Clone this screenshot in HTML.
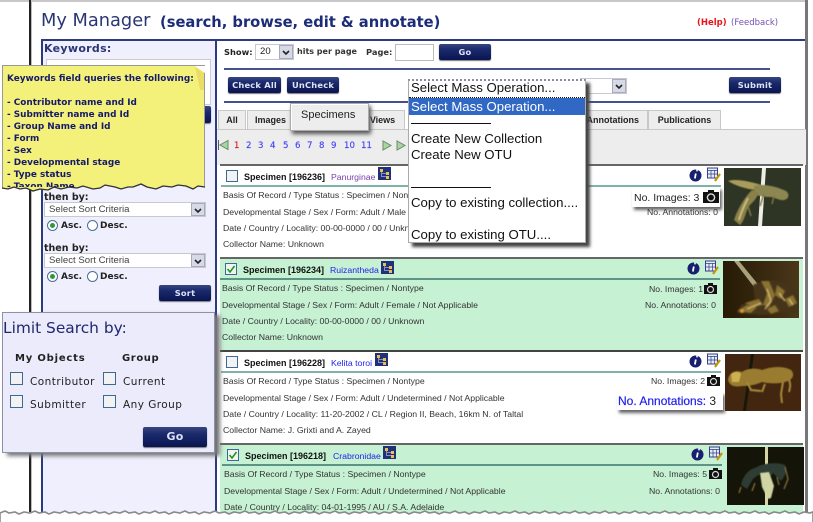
<!DOCTYPE html>
<html><head><meta charset="utf-8"><style>
html,body{margin:0;padding:0;background:#fff}
#p{position:relative;width:813px;height:522px;overflow:hidden;background:#fff;font-family:"Liberation Sans",sans-serif}
#p div,#p svg{position:absolute}
.t{white-space:nowrap;line-height:1}
.v{font-family:"DejaVu Sans",sans-serif;font-weight:bold;color:#222}
.btn{background:linear-gradient(#38457f 0,#1a2a6c 35%,#0a1450 100%);border-radius:2px;color:#dfe3f5;font:bold 8.3px/16px "DejaVu Sans",sans-serif;text-align:center;box-shadow:0 1px 1px #777;letter-spacing:.2px}
.sel{background:#fff;border:1px solid #c8c8d0;box-sizing:border-box;font-size:9.6px;color:#444;line-height:14px;padding-left:4px;white-space:nowrap}
.arr{background:#d6d9e6;border:1px solid #aab;box-sizing:border-box;right:0;top:0;bottom:0;width:14px}
.tab{background:#ededed;border:1px solid #c8c8c8;border-bottom:0;box-sizing:border-box;font:bold 9px/19px "Liberation Sans",sans-serif;text-align:center;color:#222}
.r{font-size:8.7px;color:#333;white-space:nowrap;line-height:1}
.h{font-size:9px;font-weight:bold;color:#111;white-space:nowrap;line-height:1}
.cb{width:10px;height:10px;border:1px solid #3d6a95;background:#f2f2f2;box-sizing:content-box}
.m{font-size:13.2px;color:#111;white-space:nowrap;line-height:1;left:411px}
.ln{font-family:"DejaVu Sans",sans-serif;font-size:8.6px;color:#4545f5;white-space:nowrap;line-height:1;top:142px;-webkit-text-stroke:.15px #4545f5}
.rad{width:9px;height:9px;border:1px solid #4a6f93;border-radius:50%;background:#fff}
.opt{font:10.5px/1 "DejaVu Sans",sans-serif;color:#222;letter-spacing:.45px;white-space:nowrap}
</style></head><body><div id="p">

<div style="left:0;top:0;width:807px;height:2px;background:#c8c8c8"></div>
<div style="left:29px;top:0;width:2px;height:512px;background:#222"></div>
<div style="left:31px;top:2px;width:1px;height:510px;background:#bbb"></div>
<div style="left:41px;top:40px;width:2px;height:472px;background:#2c3a80"></div>
<div style="left:43px;top:41px;width:172px;height:471px;background:#efeffd"></div>
<div style="left:215px;top:40px;width:2px;height:472px;background:#2c3a80"></div>
<div style="left:41px;top:39px;width:765px;height:2px;background:#2c3a80"></div>
<div style="left:805px;top:0;width:3px;height:512px;background:#777"></div>

<div class="t" style="left:41px;top:12px;font:17.8px/1 'DejaVu Sans',sans-serif;color:#2a3674">My Manager</div>
<div class="t" style="left:160px;top:16px;font:bold 14.7px/1 'DejaVu Sans',sans-serif;color:#1c2c78">(search, browse, edit &amp; annotate)</div>
<div class="t" style="left:697px;top:19px;font:bold 8.5px/1 'DejaVu Sans',sans-serif;color:#e8141c">(Help)</div>
<div class="t" style="left:731px;top:19px;font:8.5px/1 'DejaVu Sans',sans-serif;color:#7450b0">(Feedback)</div>

<div class="t v" style="left:44px;top:43px;font-size:11px;letter-spacing:.3px;color:#2a3674">Keywords:</div>
<div style="left:46px;top:59px;width:163px;height:44px;background:#fff;border:1px solid #ccc"></div>
<div class="btn" style="left:158px;top:106px;width:53px;height:17px"></div>

<div class="t v" style="left:224px;top:48px;font-size:8.3px">Show:</div>
<div class="sel" style="left:255px;top:44px;width:39px;height:16px;color:#222">20<div class="arr"><svg width="12" height="14" style="left:0;top:0"><path d="M3 5l3 3 3-3" fill="none" stroke="#222" stroke-width="1.6"/></svg></div></div>
<div class="t v" style="left:297px;top:48px;font-size:8px;color:#333">hits per page</div>
<div class="t v" style="left:366px;top:48px;font-size:8.3px;color:#333">Page:</div>
<div style="left:395px;top:44px;width:37px;height:15px;background:#fff;border:1px solid #bbb"></div>
<div class="btn" style="left:439px;top:44px;width:52px;height:16px">Go</div>

<div style="left:224px;top:68px;width:546px;height:2px;background:#45508e"></div>
<div style="left:224px;top:101px;width:546px;height:2px;background:#45508e"></div>
<div class="btn" style="left:228px;top:77px;width:53px;height:16px">Check All</div>
<div class="btn" style="left:287px;top:77px;width:52px;height:16px">UnCheck</div>
<div class="sel" style="left:580px;top:78px;width:47px;height:16px;border-left:0"><div class="arr"><svg width="12" height="14" style="left:0;top:0"><path d="M3 5l3 3 3-3" fill="none" stroke="#222" stroke-width="1.6"/></svg></div></div>
<div class="btn" style="left:729px;top:77px;width:52px;height:16px">Submit</div>

<div style="left:217px;top:129px;width:589px;height:35px;background:#ededed;border-top:1px solid #c8c8c8"></div>
<div class="tab" style="left:218px;top:110px;width:28px;height:19px">All</div>
<div class="tab" style="left:247px;top:110px;width:45px;height:19px;text-align:left;padding-left:7px">Images</div>
<div class="tab" style="left:360px;top:110px;width:45px;height:19px">Views</div>
<div class="tab" style="left:580px;top:110px;width:68px;height:19px;text-align:right;padding-right:8px">Annotations</div>
<div class="tab" style="left:648px;top:110px;width:73px;height:19px">Publications</div>

<svg style="left:217px;top:139px" width="14" height="12"><path d="M1.5 1v10" stroke="#557" stroke-width="1"/><path d="M11 1.5v9L3 6z" fill="#a7d6a0" stroke="#6a8c6a"/></svg>
<div class="ln" style="left:234px;color:#e02020;-webkit-text-stroke:.15px #e02020">1</div>
<div class="ln" style="left:246px">2</div><div class="ln" style="left:258px">3</div><div class="ln" style="left:270px">4</div><div class="ln" style="left:283px">5</div><div class="ln" style="left:295px">6</div><div class="ln" style="left:307px">7</div><div class="ln" style="left:319px">8</div><div class="ln" style="left:331px">9</div>
<div class="ln" style="left:344px">10</div>
<div class="ln" style="left:361px">11</div>
<svg style="left:382px;top:140px" width="27" height="11"><path d="M1 1v9L9 5.5z" fill="#a7d6a0" stroke="#6a8c6a"/><path d="M15 1v9L23 5.5z" fill="#a7d6a0" stroke="#6a8c6a"/></svg>

<!-- rows -->
<div style="left:220px;top:164px;width:583px;height:2px;background:#666"></div>
<div style="left:220px;top:166px;width:583px;height:91px;background:#fff"></div>
<div style="left:220px;top:257px;width:583px;height:2px;background:#666"></div>
<div style="left:220px;top:259px;width:583px;height:91px;background:#c6f1d3"></div>
<div style="left:220px;top:350px;width:583px;height:2px;background:#444"></div>
<div style="left:220px;top:352px;width:583px;height:91px;background:#fff"></div>
<div style="left:220px;top:443px;width:583px;height:2px;background:#666"></div>
<div style="left:220px;top:445px;width:583px;height:70px;background:#c6f1d3"></div>

<div style="left:221px;top:185px;width:500px;height:2px;background:#7fb3aa"></div>
<div style="left:220px;top:278px;width:500px;height:2px;background:#5c9487"></div>
<div style="left:221px;top:371px;width:500px;height:2px;background:#7fb3aa"></div>
<div style="left:222px;top:464px;width:500px;height:2px;background:#5c9487"></div>

<div class="cb" style="left:226px;top:170px"></div>
<div class="h" style="left:244px;top:173px">Specimen [196236]</div>
<div class="r" style="left:331px;top:173px;color:#7a3fb0">Panurginae</div>
<div class="r" style="left:223px;top:191px">Basis Of Record / Type Status : Specimen / Nontype</div>
<div class="r" style="left:223px;top:208px">Developmental Stage / Sex / Form: Adult / Male / Not Applicable</div>
<div class="r" style="left:223px;top:224px">Date / Country / Locality: 00-00-0000 / 00 / Unknown</div>
<div class="r" style="left:223px;top:240px">Collector Name: Unknown</div>

<div class="cb" style="left:225px;top:263px"></div>
<svg style="left:226px;top:264px" width="10" height="10"><path d="M1.5 5l2.5 3 4.5-6" fill="none" stroke="#1a9a1a" stroke-width="1.6"/></svg>
<div class="h" style="left:243px;top:266px">Specimen [196234]</div>
<div class="r" style="left:330px;top:266px;color:#2222ee">Ruizantheda</div>
<div class="r" style="left:222px;top:284px">Basis Of Record / Type Status : Specimen / Nontype</div>
<div class="r" style="left:222px;top:301px">Developmental Stage / Sex / Form: Adult / Female / Not Applicable</div>
<div class="r" style="left:222px;top:317px">Date / Country / Locality: 00-00-0000 / 00 / Unknown</div>
<div class="r" style="left:222px;top:333px">Collector Name: Unknown</div>

<div class="cb" style="left:226px;top:356px"></div>
<div class="h" style="left:244px;top:359px">Specimen [196228]</div>
<div class="r" style="left:331px;top:359px;color:#2222ee">Kelita toroi</div>
<div class="r" style="left:223px;top:377px">Basis Of Record / Type Status : Specimen / Nontype</div>
<div class="r" style="left:223px;top:394px">Developmental Stage / Sex / Form: Adult / Undetermined / Not Applicable</div>
<div class="r" style="left:223px;top:410px">Date / Country / Locality: 11-20-2002 / CL / Region II, Beach, 16km N. of Taltal</div>
<div class="r" style="left:223px;top:426px">Collector Name: J. Grixti and A. Zayed</div>

<div class="cb" style="left:227px;top:449px"></div>
<svg style="left:228px;top:450px" width="10" height="10"><path d="M1.5 5l2.5 3 4.5-6" fill="none" stroke="#1a9a1a" stroke-width="1.6"/></svg>
<div class="h" style="left:245px;top:452px">Specimen [196218]</div>
<div class="r" style="left:333px;top:452px;color:#2222ee">Crabronidae</div>
<div class="r" style="left:224px;top:470px">Basis Of Record / Type Status : Specimen / Nontype</div>
<div class="r" style="left:224px;top:487px">Developmental Stage / Sex / Form: Adult / Undetermined / Not Applicable</div>
<div class="r" style="left:224px;top:503px">Date / Country / Locality: 04-01-1995 / AU / S.A. Adelaide</div>

<!-- tree icons -->
<svg style="left:378px;top:167px" width="13" height="13"><rect width="13" height="13" fill="#20307a"/><path d="M3.5 3.5v6h5M3.5 6.500h5" stroke="#8890c0" fill="none"/><rect x="2" y="2" width="3" height="3" fill="#e8c050"/><rect x="8" y="5" width="3" height="3" fill="#e8c050"/><rect x="8" y="9" width="3" height="3" fill="#e8c050"/></svg>
<svg style="left:381px;top:261px" width="13" height="13"><rect width="13" height="13" fill="#20307a"/><path d="M3.500 3.500v6h5M3.500 6.500h5" stroke="#8890c0" fill="none"/><rect x="2" y="2" width="3" height="3" fill="#e8c050"/><rect x="8" y="5" width="3" height="3" fill="#e8c050"/><rect x="8" y="9" width="3" height="3" fill="#e8c050"/></svg>
<svg style="left:375px;top:353px" width="13" height="13"><rect width="13" height="13" fill="#20307a"/><path d="M3.500 3.500v6h5M3.500 6.500h5" stroke="#8890c0" fill="none"/><rect x="2" y="2" width="3" height="3" fill="#e8c050"/><rect x="8" y="5" width="3" height="3" fill="#e8c050"/><rect x="8" y="9" width="3" height="3" fill="#e8c050"/></svg>
<svg style="left:383px;top:446px" width="13" height="13"><rect width="13" height="13" fill="#20307a"/><path d="M3.500 3.500v6h5M3.500 6.500h5" stroke="#8890c0" fill="none"/><rect x="2" y="2" width="3" height="3" fill="#e8c050"/><rect x="8" y="5" width="3" height="3" fill="#e8c050"/><rect x="8" y="9" width="3" height="3" fill="#e8c050"/></svg>

<!-- info + edit icons -->
<svg style="left:689px;top:167px" width="33" height="16"><circle cx="6.500" cy="8.500" r="6" fill="#15206e"/><path d="M7.200 3.500h1.600M6.800 6.500l-.9 5" stroke="#fff" stroke-width="1.800"/><rect x="18.500" y="1" width="10" height="10" fill="#e8eaf6" stroke="#30408a"/><path d="M18 3.500h11M22 3v8M25.500 3v8M18 7h11" stroke="#30408a" stroke-width=".7"/><path d="M26 14l5-7" stroke="#c09800" stroke-width="2.200"/></svg>
<svg style="left:687px;top:260px" width="33" height="16"><circle cx="6.500" cy="8.500" r="6" fill="#15206e"/><path d="M7.200 3.500h1.600M6.800 6.500l-.9 5" stroke="#fff" stroke-width="1.800"/><rect x="18.500" y="1" width="10" height="10" fill="#e8eaf6" stroke="#30408a"/><path d="M18 3.500h11M22 3v8M25.500 3v8M18 7h11" stroke="#30408a" stroke-width=".7"/><path d="M26 14l5-7" stroke="#c09800" stroke-width="2.200"/></svg>
<svg style="left:689px;top:353px" width="33" height="16"><circle cx="6.500" cy="8.500" r="6" fill="#15206e"/><path d="M7.200 3.500h1.600M6.800 6.500l-.9 5" stroke="#fff" stroke-width="1.800"/><rect x="18.500" y="1" width="10" height="10" fill="#e8eaf6" stroke="#30408a"/><path d="M18 3.500h11M22 3v8M25.500 3v8M18 7h11" stroke="#30408a" stroke-width=".7"/><path d="M26 14l5-7" stroke="#c09800" stroke-width="2.200"/></svg>
<svg style="left:691px;top:446px" width="33" height="16"><circle cx="6.500" cy="8.500" r="6" fill="#15206e"/><path d="M7.200 3.500h1.600M6.800 6.500l-.9 5" stroke="#fff" stroke-width="1.800"/><rect x="18.500" y="1" width="10" height="10" fill="#e8eaf6" stroke="#30408a"/><path d="M18 3.500h11M22 3v8M25.500 3v8M18 7h11" stroke="#30408a" stroke-width=".7"/><path d="M26 14l5-7" stroke="#c09800" stroke-width="2.200"/></svg>

<!-- No images / annotations -->
<div style="left:632px;top:187px;width:88px;height:20px;background:#fff;box-shadow:2px 3px 3px #666"></div>
<div class="t" style="left:634px;top:193px;font-size:10.5px;color:#222">No. Images: 3</div>
<svg style="left:703px;top:190px" width="16" height="13"><rect y="2" width="16" height="11" fill="#111"/><rect x="5" width="6" height="3" fill="#111"/><circle cx="8" cy="7.500" r="3.600" fill="none" stroke="#ddd" stroke-width="1.400"/></svg>
<div class="r" style="left:647px;top:208px">No. Annotations: 0</div>

<div class="r" style="left:649px;top:285px">No. Images: 1</div>
<svg style="left:704px;top:283px" width="13" height="11"><rect y="2" width="13" height="9" fill="#111"/><rect x="4" width="5" height="3" fill="#111"/><circle cx="6.500" cy="6.500" r="3" fill="none" stroke="#ddd" stroke-width="1.200"/></svg>
<div class="r" style="left:645px;top:301px">No. Annotations: 0</div>

<div class="r" style="left:651px;top:377px">No. Images: 2</div>
<svg style="left:707px;top:375px" width="13" height="11"><rect y="2" width="13" height="9" fill="#111"/><rect x="4" width="5" height="3" fill="#111"/><circle cx="6.500" cy="6.500" r="3" fill="none" stroke="#ddd" stroke-width="1.200"/></svg>
<div style="left:617px;top:392px;width:106px;height:18px;background:#fff;box-shadow:2px 3px 3px #666"></div>
<div class="t" style="left:618px;top:395px;font-size:12px;color:#2222ee;-webkit-text-stroke:.2px #2222ee">No. Annotations: <span style="color:#222;-webkit-text-stroke:0">3</span></div>

<div class="r" style="left:653px;top:470px">No. Images: 5</div>
<svg style="left:709px;top:468px" width="13" height="11"><rect y="2" width="13" height="9" fill="#111"/><rect x="4" width="5" height="3" fill="#111"/><circle cx="6.500" cy="6.500" r="3" fill="none" stroke="#ddd" stroke-width="1.200"/></svg>
<div class="r" style="left:649px;top:487px">No. Annotations: 0</div>

<!-- thumbs -->
<svg style="left:724px;top:168px" width="77" height="58"><rect width="77" height="58" fill="#2f3524"/><path d="M38 0h4l-4 58h-4z" fill="#eeeee6"/><g style="filter:blur(.5px)"><path d="M4 13c8-3 24 1 34 4l-6 5c-10-1-20-4-28-9z" fill="#a89c5c"/><path d="M30 18c10-3 24 1 32 5 4 3 3 8-2 9-5 1-9-3-14-3-6 0-12-1-16-3z" fill="#8c8650"/><path d="M28 22c-8 8-15 20-18 30l6 5c6-6 5-14 10-20 4-4 8-8 8-13z" fill="#8a8048"/><path d="M24 30c-3 6-7 14-9 22" stroke="#c8bd80" stroke-width="2" fill="none"/><path d="M24 38l3 10M40 26l-4 12M50 28l-2 8" stroke="#7e7644" stroke-width="1.500" fill="none"/></g></svg>
<svg style="left:723px;top:261px" width="76" height="57"><defs><linearGradient id="g2" x1="0" y1="0" x2="1" y2="0"><stop offset="0" stop-color="#261a06"/><stop offset=".6" stop-color="#3a2a10"/><stop offset="1" stop-color="#4a3818"/></linearGradient></defs><rect width="76" height="57" fill="url(#g2)"/><path d="M11 0h5l26 32-4 3z" fill="#a8a27a"/><g style="filter:blur(.9px)"><path d="M30 24c12-6 28-6 38 0l8 10v16L40 54l-26-2 4-8 14-6z" fill="#46341a"/><path d="M14 50l10-6 10 2-6 6zM22 42l14-4 4 6-10 2zM38 20l6 12-4 12 6 2 6-12-6-14zM54 24l8 6-4 8-6-4zM62 38l8-4 4 8-8 4zM44 48l8-4 4 6-8 3z" fill="#8a7232"/><path d="M44 28l4 12-6 8M24 48l14-6M56 32l6 8M66 38l4 6" stroke="#e0c880" stroke-width="1.200" fill="none"/><circle cx="19" cy="50" r="2" fill="#d89a30"/></g></svg>
<svg style="left:725px;top:354px" width="76" height="57"><rect width="76" height="57" fill="#43260f"/><path d="M26 0h3l-8 57h-3z" fill="#16180c"/><g style="filter:blur(.5px)"><path d="M3 26c1-8 8-10 14-8 6-4 14-4 20-2 10-4 22-4 29 0 4 4 2 9-3 11-8 3-18 3-26 1-6 3-14 4-20 4-6 1-12 1-14-6z" fill="#9a7c30"/><path d="M6 20c3-3 8-3 10 0l-2 8-7 0z" fill="#cdb050"/><path d="M22 28l4 8 10 1M58 28l-2 12 1 9M64 26c2 4 1 8 0 12M40 30l-3 8" stroke="#a78a3a" stroke-width="2" fill="none"/></g></svg>
<svg style="left:727px;top:447px" width="77" height="58"><rect width="77" height="58" fill="#141408"/><rect x="38" width="3" height="58" fill="#d8d4a8"/><g style="filter:blur(.5px)"><path d="M14 38c2-10 8-16 16-18 6-4 22-5 28-2 3 4 0 12-4 16l-8-8-4 6-8-6-8 6-6 10z" fill="#2e3c34"/><path d="M33 26l9-1 5 14-3 12-3 1-6-12z" fill="#cfd4a4"/><path d="M58 20l3 12-4 10M28 36l-3 8M14 40l-2 6M50 30l2 8" stroke="#80703a" stroke-width="1.300" fill="none"/></g></svg>

<!-- specimens popup -->
<div style="left:290px;top:103px;width:77px;height:26px;background:#ededed;border:1px solid #aaa;box-shadow:2px 3px 4px #555,inset 1px 1px 0 #fff"></div>
<div class="t" style="left:301px;top:110px;font-size:11px;color:#222">Specimens</div>

<!-- dropdown -->
<div style="left:408px;top:79px;width:178px;height:164px;background:#fff;border:1px solid #aaa;border-top:2px dotted #88a;box-sizing:border-box;box-shadow:4px 4px 3px #444"></div>
<div style="left:409px;top:97px;width:176px;height:1px;border-top:1px dotted #111"></div>
<div style="left:409px;top:98px;width:176px;height:17px;background:#3068c4"></div>
<div class="m" style="top:81px">Select Mass Operation...</div>
<div class="m" style="top:100px;color:#fff">Select Mass Operation...</div>
<div style="left:411px;top:123px;width:80px;height:1px;background:#111"></div>
<div class="m" style="top:132px">Create New Collection</div>
<div class="m" style="top:148px">Create New OTU</div>
<div style="left:411px;top:187px;width:80px;height:1px;background:#111"></div>
<div class="m" style="top:196px">Copy to existing collection....</div>
<div class="m" style="top:228px">Copy to existing OTU....</div>

<!-- left sort -->
<div class="t v" style="left:44px;top:193px;font-size:9.500px;color:#222">then by:</div>
<div class="sel" style="left:44px;top:202px;width:162px;height:15px">Select Sort Criteria<div class="arr"><svg width="12" height="13" style="left:0;top:0"><path d="M3 5l3 3 3-3" fill="none" stroke="#222" stroke-width="1.600"/></svg></div></div>
<div class="rad" style="left:47px;top:220px"></div><div style="left:50px;top:223px;width:5px;height:5px;border-radius:50%;background:#2a9a3a"></div>
<div class="t v" style="left:61px;top:222px;font-size:9px;color:#222">Asc.</div>
<div class="rad" style="left:87px;top:220px"></div>
<div class="t v" style="left:100px;top:222px;font-size:9px;color:#222">Desc.</div>
<div class="t v" style="left:44px;top:244px;font-size:9.500px;color:#222">then by:</div>
<div class="sel" style="left:44px;top:253px;width:162px;height:15px">Select Sort Criteria<div class="arr"><svg width="12" height="13" style="left:0;top:0"><path d="M3 5l3 3 3-3" fill="none" stroke="#222" stroke-width="1.600"/></svg></div></div>
<div class="rad" style="left:47px;top:271px"></div><div style="left:50px;top:274px;width:5px;height:5px;border-radius:50%;background:#2a9a3a"></div>
<div class="t v" style="left:61px;top:273px;font-size:9px;color:#222">Asc.</div>
<div class="rad" style="left:87px;top:271px"></div>
<div class="t v" style="left:100px;top:273px;font-size:9px;color:#222">Desc.</div>
<div class="btn" style="left:159px;top:285px;width:52px;height:16px">Sort</div>

<!-- limit panel -->
<div style="left:2px;top:312px;width:213px;height:141px;background:#ebebfb;border:1px solid #8c90a8;box-sizing:border-box;box-shadow:5px 3px 4px #777"></div>
<div class="t" style="left:3px;top:321px;font:15.400px/1 'DejaVu Sans',sans-serif;color:#20286e">Limit Search by:</div>
<div class="t v" style="left:15px;top:354px;font-size:10px;letter-spacing:.8px;color:#222">My Objects</div>
<div class="t v" style="left:122px;top:354px;font-size:10px;letter-spacing:.6px;color:#222">Group</div>
<div class="cb" style="left:10px;top:372px;width:11px;height:11px"></div>
<div class="opt" style="left:30px;top:377px">Contributor</div>
<div class="cb" style="left:103px;top:372px;width:11px;height:11px"></div>
<div class="opt" style="left:123px;top:377px">Current</div>
<div class="cb" style="left:10px;top:395px;width:11px;height:11px"></div>
<div class="opt" style="left:30px;top:400px">Submitter</div>
<div class="cb" style="left:103px;top:395px;width:11px;height:11px"></div>
<div class="opt" style="left:123px;top:400px">Any Group</div>
<div class="btn" style="left:143px;top:427px;width:64px;height:20px;font-size:11px;line-height:20px">Go</div>

<!-- sticky note -->
<svg style="left:0;top:64px" width="208" height="130"><path d="M2.500 1.500H204.500V123L198 122 193 125 186 122 178 121 172 123 163 122 156 125 147 123 141 120 133 123 128 123 121 125 115 123 105 121 100 124 93 125 83 122 77 124 69 123 61 125 54 123 48 126 40 125 33 127 26 124 20 125 14 123 8 125 2.500 124z" fill="#f4f17a" stroke="#999" stroke-width="1"/><path d="M2 124L8 125 14 123 20 125 26 124 33 127 40 125 48 126 54 123 61 125 69 123 77 124 83 122 93 125 100 124 105 121 115 123 121 125 128 123 133 123 141 120 147 123 156 125 163 122 172 123 178 121 186 122 193 125 198 122 205 123" fill="none" stroke="#333" stroke-width="1.300"/><path d="M195 2h10v7z" fill="#fff"/><path d="M195 3L204 9V26H200z" fill="#e9dd68"/></svg>
<div style="left:7px;top:73px;width:195px;height:114px;overflow:hidden;font:bold 8.900px/12px 'DejaVu Sans',sans-serif;color:#151a6a;white-space:pre">Keywords field queries the following:

- Contributor name and Id
- Submitter name and Id
- Group Name and Id
- Form
- Sex
- Developmental stage
- Type status
- Taxon Name</div>

<!-- torn bottom -->
<svg style="left:0;top:505px" width="813" height="17"><path d="M0 8l5-2 4 2 6-1 4 2 5-2 6 1 5-2 4 2 6-1 4 2 5-2 6 1 5-2 4 2 6-1 4 2 5-2 6 1 5-2 4 2 6-1 4 2 5-2 6 1 5-2 4 2 6-1 4 2 5-2 6 1 5-2 4 2 6-1 4 2 5-2 6 1 5-2 4 2 6-1 4 2 5-2 6 1 5-2 4 2 6-1 4 2 5-2 6 1 5-2 4 2 6-1 4 2 5-2 6 1 5-2 4 2 6-1 4 2 5-2 6 1 5-2 4 2 6-1 4 2 5-2 6 1 5-2 4 2 6-1 4 2 5-2 6 1 5-2 4 2 6-1 4 2 5-2 6 1 5-2 4 2 6-1 4 2 5-2 6 1 5-2 4 2 6-1 4 2 5-2 6 1 5-2 4 2 6-1 4 2 5-2 6 1 5-2 4 2 6-1 4 2 5-2 6 1 5-2 4 2 6-1 4 2 5-2 6 1 5-2 4 2 6-1 4 2 5-2 6 1 5-2 4 2 6-1 4 2 5-2 6 1 5-2 4 2 6-1 4 2 5-2 6 1 5-2 4 2 6-1 4 2 5-2 6 1 5-2 4 2 6-1 4 2 5-2 6 1 5-2 4 2 6-1 4 2 5-2 6 1 5-2 4 2 6-1 4 2 5-2 6 1 5-2 4 2 6-1 4 2 5-2 6 1 5-2 4 2 6-1 4 2 5-2 6 1 5-2 4 2 6-1 4 2 5-2 6 1L813 8V30H0z" fill="#fff" stroke="#8a8a8a" stroke-width="1.600"/></svg>

</div></body></html>
